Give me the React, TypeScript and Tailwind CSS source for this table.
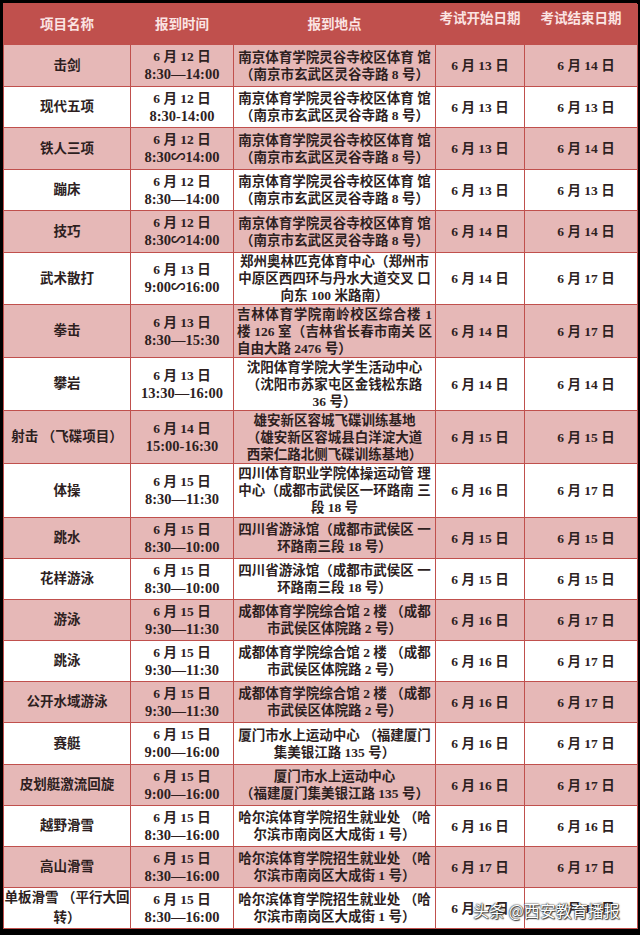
import React from "react";

type Row = {
  name: React.ReactNode;
  time: [string, string];
  addr: { t: string; a?: "c" | "l" | "j" }[];
  start: string;
  end: string;
  h: number;
  pink: boolean;
};

const nj = [
  { t: "南京体育学院灵谷寺校区体育 馆" },
  { t: "（南京市玄武区灵谷寺路 8 号）" },
];
const cd = [
  { t: "成都体育学院综合馆 2 楼 （成都" },
  { t: "市武侯区体院路 2 号）" },
];
const hrb = [
  { t: "哈尔滨体育学院招生就业处 （哈" },
  { t: "尔滨市南岗区大成街 1 号）" },
];
const sc = [
  { t: "四川省游泳馆（成都市武侯区 一" },
  { t: "环路南三段 18 号）" },
];

const rows: Row[] = [
  { name: "击剑", time: ["6 月 12 日", "8:30—14:00"], addr: nj, start: "6 月 13 日", end: "6 月 14 日", h: 42, pink: true },
  { name: "现代五项", time: ["6 月 12 日", "8:30-14:00"], addr: nj, start: "6 月 13 日", end: "6 月 13 日", h: 41, pink: false },
  { name: "铁人三项", time: ["6 月 12 日", "8:30∽14:00"], addr: nj, start: "6 月 13 日", end: "6 月 14 日", h: 42, pink: true },
  { name: "蹦床", time: ["6 月 12 日", "8:30—14:00"], addr: nj, start: "6 月 13 日", end: "6 月 13 日", h: 41, pink: false },
  { name: "技巧", time: ["6 月 12 日", "8:30∽14:00"], addr: nj, start: "6 月 14 日", end: "6 月 14 日", h: 42, pink: true },
  {
    name: "武术散打",
    time: ["6 月 13 日", "9:00∽16:00"],
    addr: [{ t: "郑州奥林匹克体育中心（郑州市" }, { t: "中原区西四环与丹水大道交叉 口" }, { t: "向东 100 米路南）" }],
    start: "6 月 14 日",
    end: "6 月 17 日",
    h: 52,
    pink: false,
  },
  {
    name: "拳击",
    time: ["6 月 13 日", "8:30—15:30"],
    addr: [{ t: "吉林体育学院南岭校区综合楼 1", a: "j" }, { t: "楼 126 室（吉林省长春市南关 区", a: "j" }, { t: "自由大路 2476 号）", a: "l" }],
    start: "6 月 14 日",
    end: "6 月 17 日",
    h: 53,
    pink: true,
  },
  {
    name: "攀岩",
    time: ["6 月 13 日", "13:30—16:00"],
    addr: [{ t: "沈阳体育学院大学生活动中心" }, { t: "（沈阳市苏家屯区金钱松东路" }, { t: "36 号）" }],
    start: "6 月 14 日",
    end: "6 月 14 日",
    h: 53,
    pink: false,
  },
  {
    name: "射击 （飞碟项目）",
    time: ["6 月 14 日", "15:00-16:30"],
    addr: [{ t: "雄安新区容城飞碟训练基地" }, { t: "（雄安新区容城县白洋淀大道" }, { t: "西荣仁路北侧飞碟训练基地）" }],
    start: "6 月 15 日",
    end: "6 月 15 日",
    h: 53,
    pink: true,
  },
  {
    name: "体操",
    time: ["6 月 15 日", "8:30—11:30"],
    addr: [{ t: "四川体育职业学院体操运动管 理" }, { t: "中心（成都市武侯区一环路南 三" }, { t: "段 18 号" }],
    start: "6 月 16 日",
    end: "6 月 17 日",
    h: 54,
    pink: false,
  },
  { name: "跳水", time: ["6 月 15 日", "8:30—10:00"], addr: sc, start: "6 月 15 日", end: "6 月 15 日", h: 41, pink: true },
  { name: "花样游泳", time: ["6 月 15 日", "8:30—10:00"], addr: sc, start: "6 月 15 日", end: "6 月 15 日", h: 41, pink: false },
  { name: "游泳", time: ["6 月 15 日", "9:30—11:30"], addr: cd, start: "6 月 16 日", end: "6 月 17 日", h: 41, pink: true },
  { name: "跳泳", time: ["6 月 15 日", "9:30—11:30"], addr: cd, start: "6 月 16 日", end: "6 月 17 日", h: 41, pink: false },
  { name: "公开水域游泳", time: ["6 月 15 日", "9:30—11:30"], addr: cd, start: "6 月 16 日", end: "6 月 17 日", h: 41, pink: true },
  {
    name: "赛艇",
    time: ["6 月 15 日", "9:00—16:00"],
    addr: [{ t: "厦门市水上运动中心 （福建厦门" }, { t: "集美银江路 135 号）" }],
    start: "6 月 16 日",
    end: "6 月 17 日",
    h: 42,
    pink: false,
  },
  {
    name: "皮划艇激流回旋",
    time: ["6 月 15 日", "9:00—16:00"],
    addr: [{ t: "厦门市水上运动中心" }, { t: "（福建厦门集美银江路 135 号）" }],
    start: "6 月 16 日",
    end: "6 月 17 日",
    h: 41,
    pink: true,
  },
  { name: "越野滑雪", time: ["6 月 15 日", "8:30—16:00"], addr: hrb, start: "6 月 16 日", end: "6 月 16 日", h: 41, pink: false },
  { name: "高山滑雪", time: ["6 月 15 日", "8:30—16:00"], addr: hrb, start: "6 月 17 日", end: "6 月 17 日", h: 41, pink: true },
  {
    name: (
      <>
        单板滑雪 （平行大回
        <br />
        转）
      </>
    ),
    time: ["6 月 15 日", "8:30—16:00"],
    addr: hrb,
    start: "6 月 17 日",
    end: "6 月 17 日",
    h: 41,
    pink: false,
  },
];

const cell = "border-r border-b border-[#c0504d] flex flex-col justify-center items-center text-center";

export default function App() {
  return (
    <div className="w-[640px] h-[935px] bg-black pt-[3px] pl-[3px] relative overflow-hidden">
      <div
        className="w-[634px] border-l border-t border-[#c0504d] text-[#2e1f1f] text-[13.5px] leading-[17px] font-semibold"
        style={{ fontFamily: '"Liberation Serif", "Noto Sans CJK SC", serif' }}
      >
        <div className="grid grid-cols-[127px_103px_202px_89px_113px] h-[41px] bg-[#c0504d] text-[#fbe4e3] font-bold">
          <div className="border-r border-b border-[#c0504d] flex items-center justify-center">项目名称</div>
          <div className="border-r border-b border-[#c0504d] flex items-center justify-center">报到时间</div>
          <div className="border-r border-b border-[#c0504d] flex items-center justify-center">报到地点</div>
          <div className="border-r border-b border-[#c0504d] flex items-start justify-center pt-[6px]">考试开始日期</div>
          <div className="border-r border-b border-[#c0504d] flex items-start justify-center pt-[6px]">考试结束日期</div>
        </div>
        {rows.map((r, i) => (
          <div
            key={i}
            className={`grid grid-cols-[127px_103px_202px_89px_113px] ${r.pink ? "bg-[#e6b8b7]" : "bg-white"}`}
            style={{ height: r.h }}
          >
            <div className={cell}>
              <div className="leading-[20px]">{r.name}</div>
            </div>
            <div className={cell}>
              <div className="whitespace-nowrap">{r.time[0]}</div>
              <div className="whitespace-nowrap text-[14.5px] leading-[18px]">{r.time[1]}</div>
            </div>
            <div className={`${cell} px-[3px]`}>
              {r.addr.map((l, j) => (
                <div
                  key={j}
                  className={`w-full whitespace-nowrap ${
                    l.a === "j" ? "text-justify [text-align-last:justify]" : l.a === "l" ? "text-left" : "text-center"
                  }`}
                >
                  {l.t}
                </div>
              ))}
            </div>
            <div className={cell}>
              <div className="whitespace-nowrap">{r.start}</div>
            </div>
            <div className={`${cell} pl-[10px]`}>
              <div className="whitespace-nowrap">{r.end}</div>
            </div>
          </div>
        ))}
      </div>
      <div
        className="absolute left-[473px] top-[899px] text-white text-[16px] leading-[22px] whitespace-nowrap [text-shadow:0_0_2px_#333,0_0_1px_#000,1px_1px_1px_#444]"
        style={{ fontFamily: '"Noto Sans CJK SC", sans-serif' }}
      >
        头条 @西安教育播报
      </div>
    </div>
  );
}
